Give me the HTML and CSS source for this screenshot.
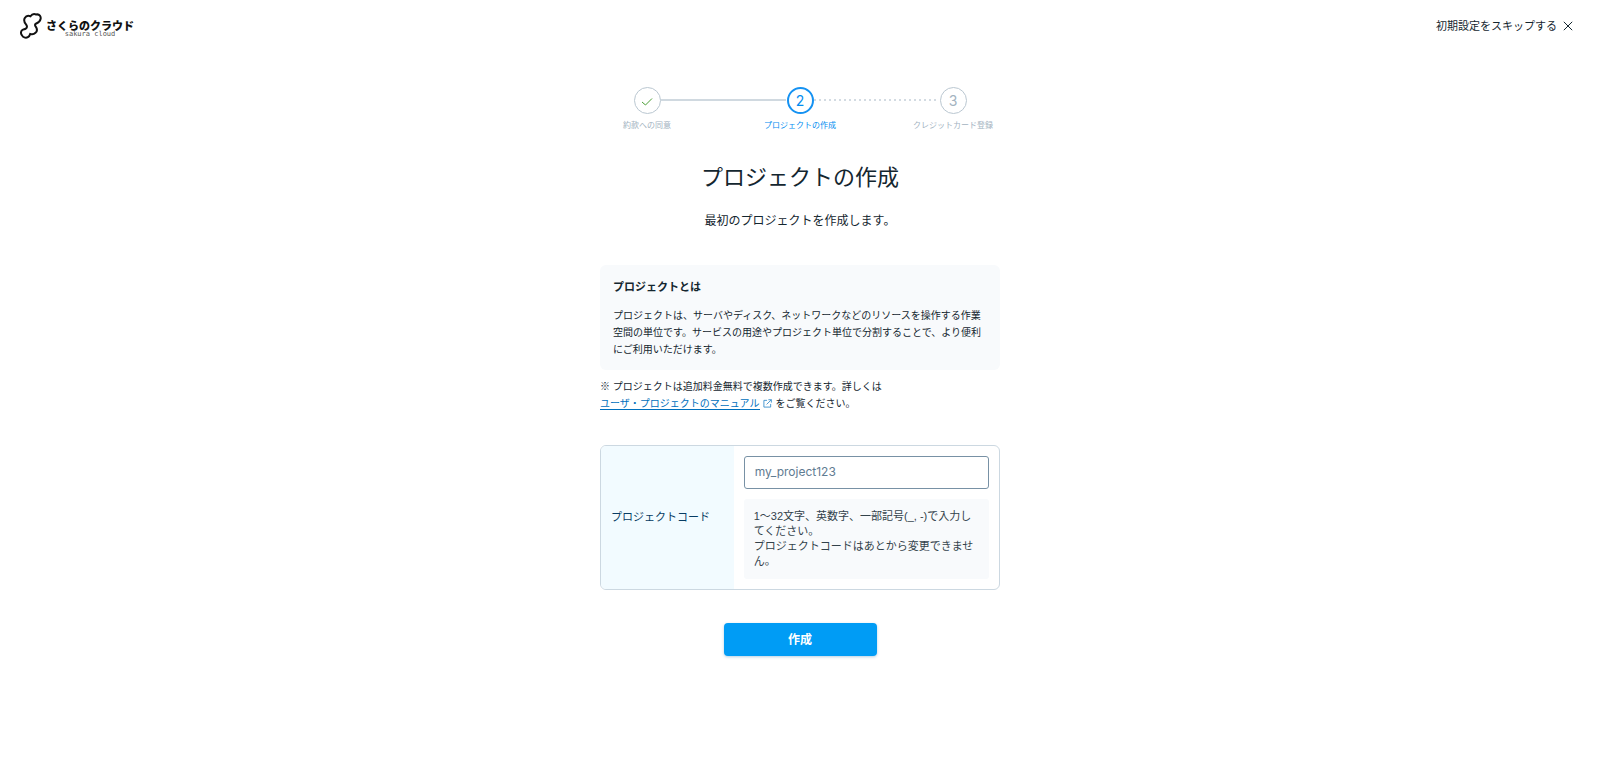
FILE: index.html
```html
<!DOCTYPE html>
<html lang="ja">
<head>
<meta charset="utf-8">
<meta name="viewport" content="width=device-width, initial-scale=1">
<title>プロジェクトの作成</title>
<link rel="stylesheet" href="styles.css">
</head>
<body>
<header class="header">
  <a class="brand" href="#">
    <svg class="brand-mark" viewBox="0 0 22 26" aria-hidden="true"><path d="M10.500 3.200C12 1 14.500 .8 16.200 1.500C19.500 .8 21.300 3.500 20.500 6.300C20 8.700 18 9.800 16.300 10.500C14.800 11.200 14.700 12 15.600 13.400C17.400 16 17 18.500 15.500 19.800C14 21.300 11.800 21.500 10.200 21C9.400 24 6.800 25.300 4.300 24.400C2.800 24 2.300 23.200 2 22.300C.4 20.500 .8 18 2.300 17C3.500 16.200 4.700 16.300 5.800 15.600C7.400 14.600 7.300 13 6 11.300C4.300 9.300 3.800 6.800 4.800 5C6 2.800 8.300 2.300 10.500 3.200Z"/></svg>
    <span class="brand-text"><span class="brand-name">さくらのクラウド</span><span class="brand-sub">sakura cloud</span></span>
  </a>
  <button class="skip" type="button">初期設定をスキップする
    <svg class="skip-icon" viewBox="0 0 10 10" aria-hidden="true"><path d="M.8.8l8.400 8.400M9.200.8L.8 9.200"/></svg>
  </button>
</header>
<main class="main">
  <ol class="steps">
    <li class="step step-done"><span class="step-dot"><svg class="check" viewBox="0 0 12 10" aria-hidden="true"><path d="M1 6l3.500 3L11 2.500"/></svg></span><span class="step-label">約款への同意</span></li>
    <li class="step step-current" aria-current="step"><span class="step-dot">2</span><span class="step-label">プロジェクトの作成</span></li>
    <li class="step"><span class="step-dot">3</span><span class="step-label">クレジットカード登録</span></li>
  </ol>
  <h1 class="title">プロジェクトの作成</h1>
  <p class="lead">最初のプロジェクトを作成します。</p>
  <section class="about">
    <h2 class="about-title">プロジェクトとは</h2>
    <p class="about-text">プロジェクトは、サーバやディスク、ネットワークなどのリソースを操作する作業空間の単位です。サービスの用途やプロジェクト単位で分割することで、より便利にご利用いただけます。</p>
  </section>
  <p class="note">※ プロジェクトは追加料金無料で複数作成できます。詳しくは<br><a class="manual" href="#">ユーザ・プロジェクトのマニュアル</a><svg class="external" viewBox="0 0 10 10" aria-hidden="true"><path d="M4.500 1.500H1V9H8.500V5.500M6 .8H9.300V4M9.300.8L4 6"/></svg>をご覧ください。</p>
  <form class="form">
    <div class="field">
      <label class="field-label" for="code">プロジェクトコード</label>
      <div class="field-body">
        <input class="field-input" id="code" type="text" placeholder="my_project123" aria-describedby="hint">
        <p class="hint" id="hint">1〜32文字、英数字、一部記号(_, -)で入力してください。<br>プロジェクトコードはあとから変更できません。</p>
      </div>
    </div>
    <button class="submit" type="button">作成</button>
  </form>
</main>
</body>
</html>
```
FILE: styles.css
```css
* { box-sizing: border-box; }
body {
  margin: 0;
  background: #fff;
  color: #14262f;
  font-family: "Liberation Sans", "Noto Sans CJK JP", sans-serif;
  font-size: 11px;
}
h1, h2, p, ol { margin: 0; padding: 0; }
button, input { font-family: inherit; }

.header {
  display: flex;
  align-items: center;
  justify-content: space-between;
  height: 52px;
  padding: 0 27px 0 20px;
}
.brand { display: flex; align-items: center; gap: 4px; color: #111; text-decoration: none; }
.brand-mark { width: 22px; height: 26px; fill: none; stroke: #111; stroke-width: 2; }
.brand-text { display: flex; flex-direction: column; align-items: center; padding-top: 5px; }
.brand-name { font-size: 11px; line-height: 12px; font-weight: 900; }
.brand-sub { color: #555; font-family: "DejaVu Sans Mono", monospace; font-size: 7px; line-height: 5px; }
.skip {
  display: flex;
  align-items: center;
  gap: 6px;
  padding: 0;
  border: 0;
  background: none;
  color: inherit;
  font-size: 11px;
  line-height: 16px;
}
.skip-icon { width: 10px; height: 10px; fill: none; stroke: #14262f; }

.main {
  display: flex;
  flex-direction: column;
  max-width: 400px;
  margin: 0 auto;
  padding: 35px 0 40px;
}
.steps { display: flex; align-self: center; list-style: none; }
.step {
  position: relative;
  display: flex;
  flex-direction: column;
  align-items: center;
  gap: 6px;
  width: 153px;
  color: #a3b3bf;
}
.step-dot {
  display: flex;
  align-items: center;
  justify-content: center;
  width: 27px;
  height: 27px;
  border: 1px solid #bac7d1;
  border-radius: 50%;
  font-family: Inter, sans-serif;
  font-size: 14px;
}
.step-label { font-size: 8px; line-height: 12px; white-space: nowrap; }
.step-current { color: #008cf0; }
.step-current .step-dot { border: 2px solid #1592f2; }
.step + .step::before {
  content: "";
  position: absolute;
  top: 12px;
  right: calc(50% + 14px);
  width: calc(100% - 28px);
  height: 2px;
  background: repeating-linear-gradient(90deg, #d3dbe2 0 2px, transparent 2px 5px);
}
.step + .step-current::before { background: #d0d9e0; }
.check { width: 12px; height: 10px; fill: none; stroke: #4a9e35; }

.title { margin-top: 30px; font-size: 22px; line-height: 32px; font-weight: 400; text-align: center; }
.lead { margin-top: 18px; font-size: 12px; line-height: 18px; text-align: center; }
.about { margin-top: 35px; padding: 13px 13px 12px; border-radius: 6px; background: #f8fafc; }
.about-title { font-size: 11px; line-height: 18px; font-weight: 700; }
.about-text { margin-top: 11px; font-size: 10px; line-height: 17px; }
.note { margin-top: 8px; font-size: 10px; line-height: 17px; }
.manual { color: #0070bd; text-decoration: none; border-bottom: 1px solid #0070bd; }
.external { width: 9px; height: 9px; margin: 0 4px 0 3px; vertical-align: -1px; fill: none; stroke: #3b90cc; }

.form { display: flex; flex-direction: column; margin-top: 33px; }
.field {
  display: grid;
  grid-template-columns: 1fr 2fr;
  border: 1px solid #ccd8e1;
  border-radius: 6px;
  overflow: hidden;
}
.field-label { display: flex; align-items: center; padding: 0 10px 4px; background: #f2fbff; color: #073c63; font-size: 11px; }
.field-body { display: flex; flex-direction: column; gap: 10px; padding: 10px; }
.field-input {
  width: 100%;
  height: 33px;
  padding: 0 10px 2px;
  border: 1px solid #7891a5;
  border-radius: 3px;
  background: #fff;
  color: #14262f;
  font-family: Inter, "Noto Sans CJK JP", sans-serif;
  font-size: 12px;
}
.field-input::placeholder { color: #5f7c92; opacity: 1; }
.hint { padding: 10px; border-radius: 3px; background: #f8fafc; color: #33424b; font-size: 11px; line-height: 15px; }
.submit {
  align-self: center;
  width: 153px;
  height: 33px;
  margin-top: 33px;
  padding: 0 0 2px;
  border: 0;
  border-radius: 4px;
  background: #009cf5;
  box-shadow: 0 1px 3px #0060a04d;
  color: #fff;
  font-size: 12px;
  font-weight: 700;
}
```
